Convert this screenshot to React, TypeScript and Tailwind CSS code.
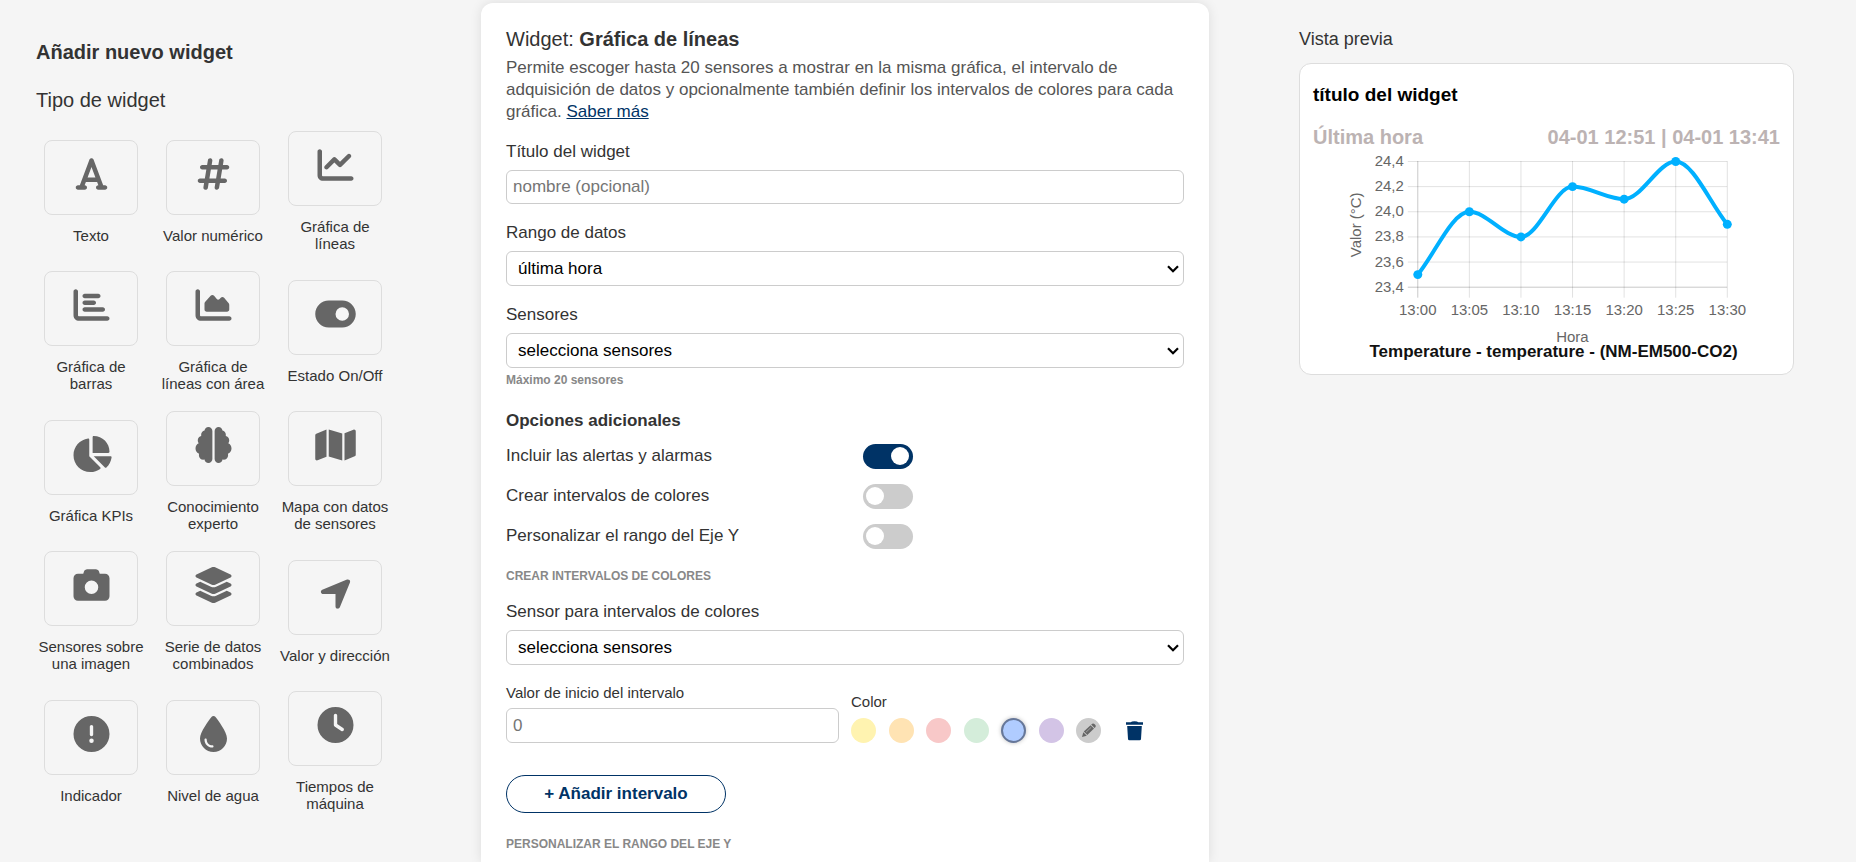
import { useState, type ReactNode } from "react";
import type { IconType } from "react-icons";
import {
  FaFont,
  FaHashtag,
  FaChartLine,
  FaChartBar,
  FaChartArea,
  FaToggleOn,
  FaChartPie,
  FaBrain,
  FaMap,
  FaCamera,
  FaLayerGroup,
  FaLocationArrow,
  FaCircleExclamation,
  FaDroplet,
  FaClock,
} from "react-icons/fa6";

const widgetTypes: { label: string; icon: IconType }[] = [
  { label: "Texto", icon: FaFont },
  { label: "Valor numérico", icon: FaHashtag },
  { label: "Gráfica de líneas", icon: FaChartLine },
  { label: "Gráfica de barras", icon: FaChartBar },
  { label: "Gráfica de líneas con área", icon: FaChartArea },
  { label: "Estado On/Off", icon: FaToggleOn },
  { label: "Gráfica KPIs", icon: FaChartPie },
  { label: "Conocimiento experto", icon: FaBrain },
  { label: "Mapa con datos de sensores", icon: FaMap },
  { label: "Sensores sobre una imagen", icon: FaCamera },
  { label: "Serie de datos combinados", icon: FaLayerGroup },
  { label: "Valor y dirección", icon: FaLocationArrow },
  { label: "Indicador", icon: FaCircleExclamation },
  { label: "Nivel de agua", icon: FaDroplet },
  { label: "Tiempos de máquina", icon: FaClock },
];

function WidgetType({ label, icon: Icon }: { label: string; icon: IconType }) {
  return (
    <button type="button" className="flex w-[112px] flex-col items-center gap-3 text-[15px] leading-[17px]">
      <span className="flex h-[75px] w-[94px] items-start justify-center rounded-lg border border-[#ddd] pt-[15px] text-[#666]">
        <Icon className="h-9 w-[41px] shrink-0" aria-hidden="true" />
      </span>
      <span>{label}</span>
    </button>
  );
}

function SelectField({ id, label, option, hint }: { id: string; label: string; option: string; hint?: string }) {
  return (
    <div className="flex flex-col">
      <label htmlFor={id} className="leading-6">{label}</label>
      <div className="relative mt-1.5">
        <select
          id={id}
          className="block h-[35px] w-full appearance-none rounded-md border border-[#ccc] bg-white pr-8 pl-[11px] text-black"
        >
          <option>{option}</option>
        </select>
        <svg viewBox="0 0 12 8" className="pointer-events-none absolute top-3.5 right-[5px] w-3" aria-hidden="true">
          <path d="M1 1.2 6 6.2 11 1.2" fill="none" stroke="#000" strokeWidth="2.2" />
        </svg>
      </div>
      {hint && <p className="mt-1 text-xs leading-4 font-bold text-[#888]">{hint}</p>}
    </div>
  );
}

function Toggle({ id, label, initial = false }: { id: string; label: string; initial?: boolean }) {
  const [on, setOn] = useState(initial);
  return (
    <div className="grid h-10 grid-cols-[357px_1fr] items-center">
      <label htmlFor={id}>{label}</label>
      <input
        id={id}
        type="checkbox"
        role="switch"
        checked={on}
        onChange={() => setOn(!on)}
        className="flex h-[25px] w-[50px] cursor-pointer appearance-none items-center rounded-full bg-[#ccc] px-[3px] before:size-[18px] before:rounded-full before:bg-white before:content-[''] checked:justify-end checked:bg-[#003366] checked:px-1"
      />
    </div>
  );
}

function SectionTitle({ children }: { children: ReactNode }) {
  return <h3 className="text-xs leading-4 font-bold text-[#888] uppercase">{children}</h3>;
}

const swatches = [
  { name: "Amarillo", className: "bg-[#fff3b0]" },
  { name: "Naranja", className: "bg-[#ffe3b3]" },
  { name: "Rojo", className: "bg-[#f8c8c8]" },
  { name: "Verde", className: "bg-[#d4edda]" },
  { name: "Azul", className: "bg-[#b0ccff] border-2 border-[#667799] shadow-[0_0_4px_rgba(0,0,0,0.25)]" },
  { name: "Morado", className: "bg-[#d3c4e6]" },
];

const times = ["13:00", "13:05", "13:10", "13:15", "13:20", "13:25", "13:30"];
const values = ["24,4", "24,2", "24,0", "23,8", "23,6", "23,4"];
const readings = [23.5, 24.0, 23.8, 24.2, 24.1, 24.4, 23.9];

const px = (i: number) => 105 + i * 51.7;
const py = (v: number) => 12.5 + (24.4 - v) * 126;

// Monotone cubic curve: flat at every peak and valley, so it never overshoots a reading.
function monotonePath(points: { x: number; y: number }[]) {
  const last = points.length - 1;
  const slope = (i: number) => (points[i + 1].y - points[i].y) / (points[i + 1].x - points[i].x);
  const tangents = points.map((_, i) => {
    if (i === 0) return slope(0);
    if (i === last) return slope(last - 1);
    const a = slope(i - 1);
    const b = slope(i);
    return a * b <= 0 ? 0 : (a + b) / 2;
  });
  return points.reduce((d, p, i) => {
    if (i === 0) return `M${p.x} ${p.y}`;
    const prev = points[i - 1];
    const third = (p.x - prev.x) / 3;
    return `${d} C${prev.x + third} ${prev.y + third * tangents[i - 1]} ${p.x - third} ${p.y - third * tangents[i]} ${p.x} ${p.y}`;
  }, "");
}

function LineChart() {
  const points = readings.map((v, i) => ({ x: px(i), y: py(v) }));
  return (
    <svg
      viewBox="0 0 468 193"
      className="block w-full overflow-visible"
      role="img"
      aria-label="Temperatura durante la última hora"
    >
      <g fill="none" stroke="#000" strokeWidth="1">
        {values.map((v, i) => (
          <path key={v} d={`M95 ${12.5 + i * 25.2}H415`} strokeOpacity={i === 5 ? 0.22 : 0.12} />
        ))}
        {times.map((t, i) => (
          <path key={t} d={`M${px(i)} 12V149`} strokeOpacity={i === 0 ? 0.22 : 0.12} />
        ))}
      </g>
      <g fill="#666" fontSize="15">
        {values.map((v, i) => (
          <text key={v} x="91" y={17 + i * 25.2} textAnchor="end">{v}</text>
        ))}
        {times.map((t, i) => (
          <text key={t} x={px(i)} y="166" textAnchor="middle">{t}</text>
        ))}
        <text x="260" y="193" textAnchor="middle">Hora</text>
        <text transform="translate(48 76) rotate(-90)" textAnchor="middle">Valor (°C)</text>
      </g>
      <path d={monotonePath(points)} fill="none" stroke="#00b0ff" strokeWidth="4" />
      {points.map((p) => (
        <circle key={p.x} cx={p.x} cy={p.y} r="4.5" fill="#00b0ff" />
      ))}
    </svg>
  );
}

export default function App() {
  return (
    <div className="flex min-h-screen bg-[#f5f5f5] font-['Liberation_Sans',Arial,sans-serif] text-[17px] text-[#333]">
      <aside className="w-[481px] shrink-0 pt-10 pl-9">
        <h1 className="text-xl leading-6 font-bold">Añadir nuevo widget</h1>
        <h2 className="mt-6 text-xl leading-6">Tipo de widget</h2>
        <div className="mt-[18px] -ml-px grid w-fit auto-rows-[123px] grid-cols-3 items-center gap-x-[10px] gap-y-[17px]">
          {widgetTypes.map((w) => (
            <WidgetType key={w.label} label={w.label} icon={w.icon} />
          ))}
        </div>
      </aside>

      <main className="mt-[3px] min-w-0 flex-1 rounded-t-xl bg-white px-[25px] pt-6 shadow-[0_0_12px_rgba(0,0,0,0.1)]">
        <h2 className="text-xl leading-6">
          Widget: <strong>Gráfica de líneas</strong>
        </h2>
        <p className="mt-1.5 leading-[22px] text-[#555]">
          Permite escoger hasta 20 sensores a mostrar en la misma gráfica, el intervalo de adquisición de datos y
          opcionalmente también definir los intervalos de colores para cada gráfica.{" "}
          <a href="#saber-mas" className="text-[#003366] underline">Saber más</a>
        </p>

        <form className="mt-[17px]" onSubmit={(e) => e.preventDefault()}>
          <div className="flex flex-col gap-[17px]">
            <div className="flex flex-col">
              <label htmlFor="titulo" className="leading-6">Título del widget</label>
              <input
                id="titulo"
                type="text"
                placeholder="nombre (opcional)"
                className="mt-1.5 h-[34px] rounded-md border border-[#ccc] px-1.5 placeholder:text-[#757575]"
              />
            </div>
            <SelectField id="rango" label="Rango de datos" option="última hora" />
            <SelectField id="sensores" label="Sensores" option="selecciona sensores" hint="Máximo 20 sensores" />
          </div>

          <h3 className="mt-[21px] mb-[3px] leading-6 font-bold">Opciones adicionales</h3>
          <Toggle id="alertas" label="Incluir las alertas y alarmas" initial />
          <Toggle id="intervalos" label="Crear intervalos de colores" />
          <Toggle id="eje" label="Personalizar el rango del Eje Y" />

          <div className="mt-3 flex flex-col gap-4">
            <SectionTitle>Crear intervalos de colores</SectionTitle>
            <SelectField id="sensor-color" label="Sensor para intervalos de colores" option="selecciona sensores" />
          </div>

          <div className="mt-[18px] flex items-end gap-3">
            <div className="flex w-[333px] flex-col">
              <label htmlFor="inicio" className="text-[15px] leading-5">Valor de inicio del intervalo</label>
              <input
                id="inicio"
                type="text"
                inputMode="numeric"
                placeholder="0"
                className="mt-[5px] h-[35px] rounded-md border border-[#ccc] px-1.5 placeholder:text-[#757575]"
              />
            </div>
            <fieldset>
              <legend className="mb-1.5 text-[15px] leading-5">Color</legend>
              <div className="flex items-center">
                <div className="flex w-[250px] justify-between">
                  {swatches.map((s) => (
                    <button
                      key={s.name}
                      type="button"
                      aria-label={s.name}
                      className={`size-[25px] rounded-full ${s.className}`}
                    />
                  ))}
                  <button
                    type="button"
                    aria-label="Color personalizado"
                    className="flex size-[25px] items-center justify-center rounded-full bg-[#ccc] text-[#666]"
                  >
                    <svg viewBox="0 0 16 16" className="size-4" fill="currentColor" aria-hidden="true">
                      <path d="M1 14 2.3 9.2 5.8 12.7Z" />
                      <path d="M2.8 8.6 9.6 2.2 13 5.500 6.300 12Z" />
                      <path d="M10.200 1.600 11.300 .7Q12.400 0 13.400 .9L14.400 1.900Q15.200 2.900 14.500 3.900L13.600 4.900Z" />
                      <path d="M5 9.200 10.200 4.300" stroke="#ccc" strokeWidth=".7" strokeOpacity=".8" />
                    </svg>
                  </button>
                </div>
                <button type="button" aria-label="Eliminar intervalo" className="ml-[25px] text-[#003366]">
                  <svg viewBox="0 0 17 20" className="h-5 w-[17px]" fill="currentColor" aria-hidden="true">
                    <path d="M0 1.300H4.700Q5.500 .300 8.500 .300T12.300 1.300H17V3.700H0Z" />
                    <path d="M1.200 4.900H15.800L15 18Q14.900 19.200 13.600 19.200H3.400Q2.100 19.200 2 18Z" />
                  </svg>
                </button>
              </div>
            </fieldset>
          </div>

          <button
            type="button"
            className="mt-8 mb-[23px] flex h-[38px] w-[220px] items-center justify-center rounded-full border border-[#003366] font-bold text-[#003366]"
          >
            + Añadir intervalo
          </button>
          <SectionTitle>Personalizar el rango del Eje Y</SectionTitle>
        </form>
      </main>

      <section className="w-[647px] shrink-0 pt-[27px] pr-[62px] pl-[90px]">
        <h2 className="text-lg leading-6">Vista previa</h2>
        <article className="mt-3 rounded-xl border border-[#ddd] bg-white px-[13px] pt-[19px] pb-3">
          <h3 className="text-[19px] leading-6 font-bold text-black">título del widget</h3>
          <div className="mt-[18px] flex justify-between text-xl leading-6 font-bold text-[#bcb3b3]">
            <span>Última hora</span>
            <span>04-01 12:51 | 04-01 13:41</span>
          </div>
          <LineChart />
          <p className="pl-3.5 text-center leading-5 font-bold text-[#111]">Temperature - temperature - (NM-EM500-CO2)</p>
        </article>
      </section>
    </div>
  );
}
